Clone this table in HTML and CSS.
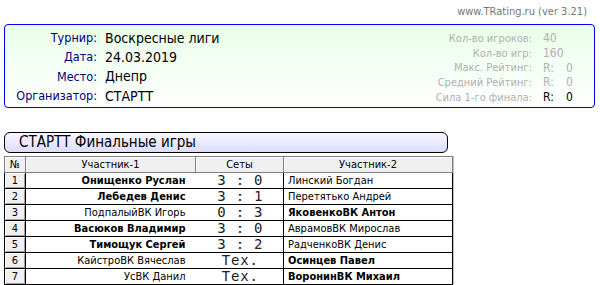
FILE: index.html
```html
<!DOCTYPE html>
<html lang="ru">
<head>
<meta charset="utf-8">
<link rel="stylesheet" href="styles.css">
</head>
<body>
<div class="ver">www.TRating.ru (ver 3.21)</div>
<div class="info">
  <div class="info-left">
    <div class="lbl">Турнир:</div><div class="val">Воскресные лиги</div>
    <div class="lbl">Дата:</div><div class="val">24.03.2019</div>
    <div class="lbl">Место:</div><div class="val">Днепр</div>
    <div class="lbl">Организатор:</div><div class="val">СТАРТТ</div>
  </div>
  <div class="info-right">
    <div class="slbl">Кол-во игроков:</div><div class="sval">40</div>
    <div class="slbl">Кол-во игр:</div><div class="sval">160</div>
    <div class="slbl">Макс. Рейтинг:</div><div class="sval"><span class="r">R:</span>0</div>
    <div class="slbl">Средний Рейтинг:</div><div class="sval"><span class="r">R:</span>0</div>
    <div class="slbl">Сила 1-го финала:</div><div class="sval dark"><span class="r">R:</span>0</div>
  </div>
</div>
<div class="section">СТАРТТ Финальные игры</div>
<table class="games">
  <thead>
    <tr><th class="c-num">№</th><th class="c-p1">Участник-1</th><th class="c-sc">Сеты</th><th class="c-p2">Участник-2</th></tr>
  </thead>
  <tbody>
    <tr><td class="num">1</td><td class="p1 win">Онищенко Руслан</td><td class="sc">3 : 0</td><td class="p2">Линский Богдан</td></tr>
    <tr><td class="num">2</td><td class="p1 win">Лебедев Денис</td><td class="sc">3 : 1</td><td class="p2">Перетятько Андрей</td></tr>
    <tr><td class="num">3</td><td class="p1">ПодпалыйВК Игорь</td><td class="sc">0 : 3</td><td class="p2 win">ЯковенкоВК Антон</td></tr>
    <tr><td class="num">4</td><td class="p1 win">Васюков Владимир</td><td class="sc">3 : 0</td><td class="p2">АврамовВК Мирослав</td></tr>
    <tr><td class="num">5</td><td class="p1 win">Тимощук Сергей</td><td class="sc">3 : 2</td><td class="p2">РадченкоВК Денис</td></tr>
    <tr><td class="num">6</td><td class="p1">КайстроВК Вячеслав</td><td class="sc">Тех.</td><td class="p2 win">Осинцев Павел</td></tr>
    <tr><td class="num">7</td><td class="p1">УсВК Данил</td><td class="sc">Тех.</td><td class="p2 win">ВоронинВК Михаил</td></tr>
  </tbody>
</table>
</body>
</html>
```
FILE: styles.css
```css
html, body {
  margin: 0;
  padding: 0;
  background: #fff;
}
body {
  padding: 0 5px 0 4px;
  font-family: "DejaVu Sans Condensed", "DejaVu Sans", sans-serif;
  color: #000;
}
.ver {
  text-align: right;
  font-size: 11px;
  line-height: 14px;
  color: #777;
  padding: 5px 8px 0 0;
  height: 19px;
  box-sizing: border-box;
}
.info {
  margin-top: 5px;
  height: 84px;
  box-sizing: border-box;
  border: 1px solid #0000ee;
  border-radius: 4px;
  background: linear-gradient(to bottom, #e9ffe9, #ffffff);
  display: flex;
  justify-content: space-between;
}
.info-left {
  display: grid;
  grid-template-columns: 92px auto;
  column-gap: 8px;
  grid-auto-rows: 19.3px;
  align-items: center;
  padding-top: 3px;
}
.lbl {
  text-align: right;
  font-size: 12.5px;
  color: #000080;
}
.val {
  font-size: 14px;
  color: #000;
}
.info-right {
  display: grid;
  grid-template-columns: auto 32px;
  column-gap: 11px;
  grid-auto-rows: 14.7px;
  align-items: center;
  padding: 6px 19px 0 0;
}
.slbl {
  text-align: right;
  font-size: 11px;
  color: #b0b0b0;
}
.sval {
  font-size: 12px;
  color: #b0b0b0;
}
.sval.dark {
  color: #000;
}
.r {
  display: inline-block;
  width: 23px;
}
.section {
  margin-top: 24px;
  width: 444px;
  height: 21px;
  box-sizing: border-box;
  border: 1px solid #000;
  border-radius: 6px;
  background: linear-gradient(to bottom, #f8f8ff, #dcdcff);
  font-size: 15px;
  line-height: 19px;
  padding-left: 14px;
}
.games {
  margin-top: 3px;
  border-collapse: collapse;
  table-layout: fixed;
  font-size: 11px;
  box-shadow: 1px 0 0 #c0c0c0;
}
.games th,
.games td {
  padding: 0;
  height: 15px;
  line-height: 14px;
  border: 1px solid #000;
  white-space: nowrap;
  overflow: hidden;
}
.games th {
  font-weight: normal;
  background: #f0f0f0;
  border-color: #808080;
  box-shadow: inset 1px 1px 0 #fff;
  text-align: center;
}
.c-num { width: 20px; }
.c-p1 { width: 169px; }
.c-sc { width: 87px; }
.c-p2 { width: 168px; }
.games td.num {
  background: #f0f0f0;
  text-align: center;
  box-shadow: inset 1px 1px 0 #fff, inset -1px -1px 0 #a0a0a0;
}
.games td.p1 {
  text-align: right;
  padding-right: 10px;
  border-right: none;
}
.games td.sc {
  border-left: none;
  text-align: center;
  font-family: "DejaVu Sans Mono", monospace;
  font-size: 14px;
  letter-spacing: 0.8px;
  line-height: 15px;
  padding-left: 2px;
  color: #222;
}
.games td.p2 {
  text-align: left;
  padding-left: 4px;
}
.games td.win {
  font-weight: bold;
}
```
